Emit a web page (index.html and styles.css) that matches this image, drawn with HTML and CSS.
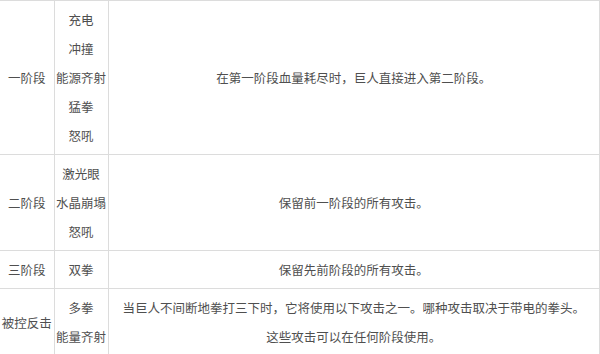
FILE: index.html
```html
<!DOCTYPE html>
<html lang="zh">
<head>
<meta charset="utf-8">
<link rel="stylesheet" href="styles.css">
</head>
<body>
<table class="phases">
  <colgroup>
    <col class="c-stage">
    <col class="c-attack">
    <col class="c-desc">
  </colgroup>
  <tr>
    <td>一阶段</td>
    <td>充电<br>冲撞<br>能源齐射<br>猛拳<br>怒吼</td>
    <td>在第一阶段血量耗尽时，巨人直接进入第二阶段。</td>
  </tr>
  <tr>
    <td>二阶段</td>
    <td>激光眼<br>水晶崩塌<br>怒吼</td>
    <td>保留前一阶段的所有攻击。</td>
  </tr>
  <tr>
    <td>三阶段</td>
    <td>双拳</td>
    <td>保留先前阶段的所有攻击。</td>
  </tr>
  <tr>
    <td>被控反击</td>
    <td>多拳<br>能量齐射</td>
    <td>当巨人不间断地拳打三下时，它将使用以下攻击之一。哪种攻击取决于带电的拳头。<br>这些攻击可以在任何阶段使用。</td>
  </tr>
</table>
</body>
</html>
```

FILE: styles.css
```css
html, body {
  margin: 0;
  padding: 0;
  background: #fff;
}

.phases {
  width: 600px;
  border-collapse: collapse;
  table-layout: fixed;
  font-family: "Noto Sans CJK SC", "Microsoft YaHei", sans-serif;
  font-size: 12.5px;
  line-height: 29px;
  color: #4f4f4f;
  border-top: 1px solid #dcdcdc;
  border-right: 1px solid #dcdcdc;
  border-bottom: 1px solid #dcdcdc;
}

.c-stage { width: 54px; }
.c-attack { width: 54px; }

.phases td {
  border-top: 1px solid #dcdcdc;
  border-bottom: 1px solid #dcdcdc;
  border-left: 1px solid #dcdcdc;
  padding: 4px 0;
  text-align: center;
  vertical-align: middle;
  white-space: nowrap;
}

.phases td:first-child {
  border-left: none;
}
```
